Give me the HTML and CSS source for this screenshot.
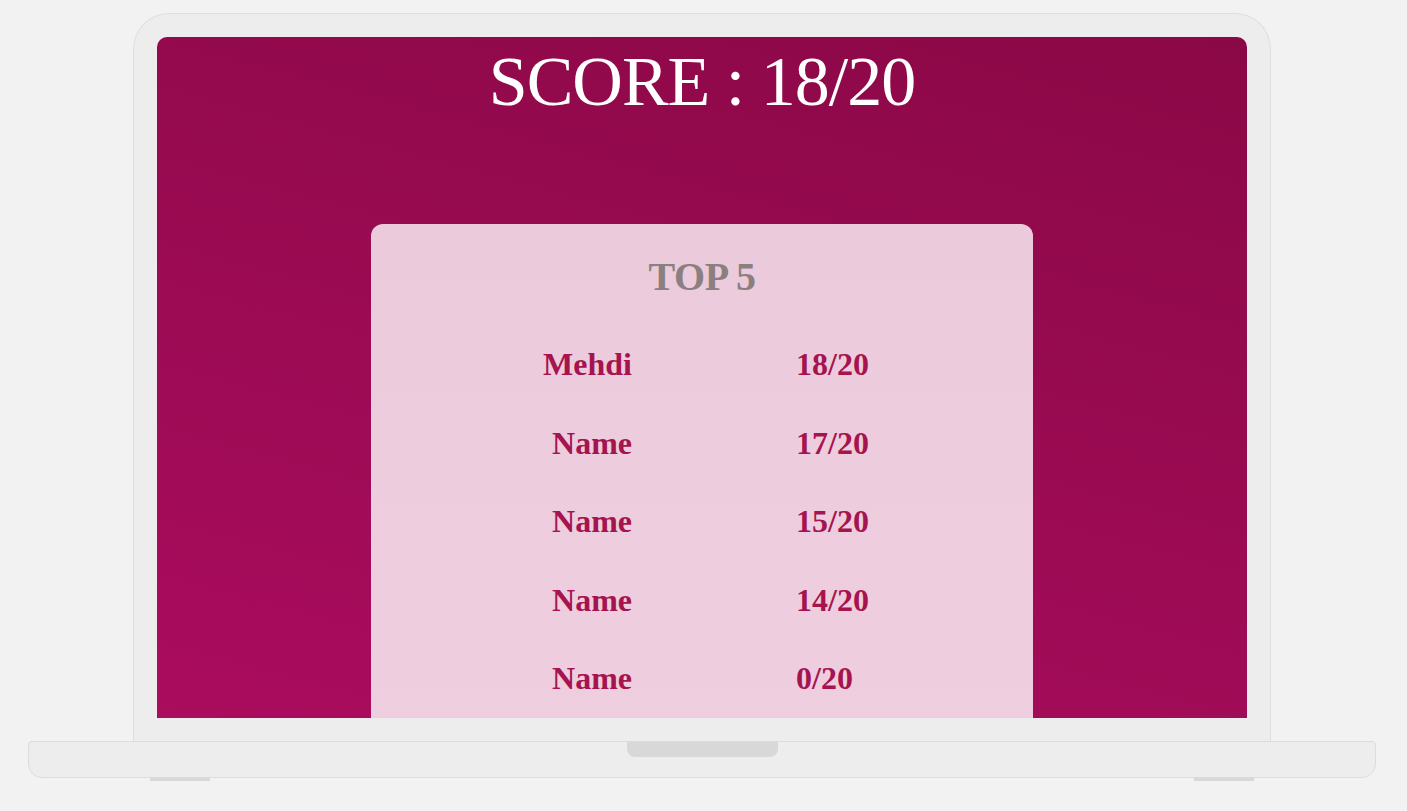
FILE: index.html
```html
<!DOCTYPE html>
<html lang="fr">
<head>
<meta charset="utf-8">
<title>Score</title>
<link rel="stylesheet" href="styles.css">
</head>
<body>
<div class="laptop">
  <div class="lid">
    <div class="screen">
      <h1 class="score">SCORE : 18/20</h1>
      <section class="card">
        <h2 class="card-title">TOP 5</h2>
        <ul class="ranking">
          <li class="row"><span class="name">Mehdi</span><span class="pts">18/20</span></li>
          <li class="row"><span class="name">Name</span><span class="pts">17/20</span></li>
          <li class="row"><span class="name">Name</span><span class="pts">15/20</span></li>
          <li class="row"><span class="name">Name</span><span class="pts">14/20</span></li>
          <li class="row"><span class="name">Name</span><span class="pts">0/20</span></li>
        </ul>
      </section>
    </div>
  </div>
  <div class="base">
    <div class="notch"></div>
  </div>
  <div class="feet">
    <span class="foot"></span>
    <span class="foot"></span>
  </div>
</div>
</body>
</html>
```
FILE: styles.css
```css
html, body {
  margin: 0;
  padding: 0;
  background: #f2f2f2;
}

body {
  font-family: "Liberation Serif", "Times New Roman", serif;
}

.laptop {
  display: flex;
  flex-direction: column;
  align-items: center;
  padding-top: 13px;
}

.lid {
  width: 1090px;
  padding: 23px;
  background: #ededed;
  border: 1px solid #dedede;
  border-bottom: none;
  border-radius: 36px 36px 0 0;
  margin-left: -3px;
}

.screen {
  height: 681px;
  overflow: hidden;
  border-radius: 10px 10px 0 0;
  background: linear-gradient(195deg, #8b0846 0%, #970a50 40%, #aa0c5e 100%);
  display: flex;
  flex-direction: column;
  align-items: center;
}

.score {
  margin: 10px 0 0 0;
  font-weight: 400;
  font-size: 70px;
  line-height: 70px;
  height: 70px;
  letter-spacing: -1px;
  color: #ffffff;
}

.card {
  margin-top: 107px;
  width: 662px;
  min-height: 560px;
  flex-shrink: 0;
  background: linear-gradient(180deg, #ebcbdb 0%, #efcee0 100%);
  border-radius: 12px 12px 0 0;
  padding-top: 33px;
  box-sizing: border-box;
}

.card-title {
  margin: 0;
  text-align: center;
  font-size: 40px;
  line-height: 40px;
  font-weight: 700;
  color: #8a8080;
  letter-spacing: -0.5px;
}

.ranking {
  list-style: none;
  margin: 28px 0 0 0;
  padding: 0;
}

.row {
  display: grid;
  grid-template-columns: 261px 1fr;
  column-gap: 164px;
  height: 78.5px;
  line-height: 78.5px;
  font-size: 32px;
  font-weight: 700;
  color: #a61450;
}

.name {
  text-align: right;
}

.pts {
  text-align: left;
}

.base {
  width: 1346px;
  height: 35px;
  background: #ededed;
  border: 1px solid #dcdcdc;
  border-radius: 4px 4px 14px 14px;
  display: flex;
  justify-content: center;
  margin-left: -3px;
}

.notch {
  width: 151px;
  height: 15px;
  background: #d8d8d8;
  border-radius: 0 0 8px 8px;
  margin-left: 1px;
}

.feet {
  width: 1348px;
  height: 3px;
  display: flex;
  justify-content: space-between;
  padding: 0 122px;
  box-sizing: border-box;
  margin-left: -3px;
}

.foot {
  width: 60px;
  height: 3px;
  background: #d8d8d8;
}
```
